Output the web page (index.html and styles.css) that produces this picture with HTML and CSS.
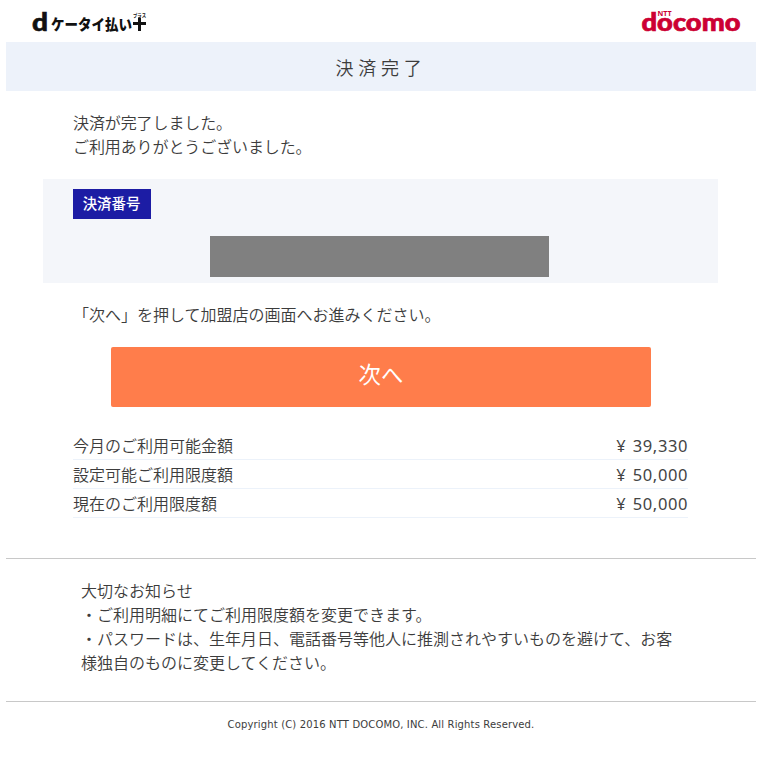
FILE: index.html
```html
<!DOCTYPE html>
<html lang="ja">
<head>
  <meta charset="UTF-8">
  <title>決済完了</title>
  <meta name="viewport" content="width=device-width, initial-scale=1.0" />
  <link rel="stylesheet" href="styles.css">
</head>
<body>
  <div class="page">
    <header class="header">
      <svg class="logo-keitai" width="116" height="24" viewBox="0 0 116 24">
        <text x="0" y="20.800" class="logo-d" textLength="16" lengthAdjust="spacingAndGlyphs">d</text>
        <text x="19" y="19.500" class="logo-kana" textLength="81" lengthAdjust="spacingAndGlyphs">ケータイ払い</text>
        <text x="101" y="6.500" class="logo-ruby" textLength="13" lengthAdjust="spacingAndGlyphs">プラス</text>
        <path d="M107.500 7.500v13.500M101 13.500h13" stroke="#111" stroke-width="3" />
      </svg>
      <svg class="logo-docomo" width="102" height="24" viewBox="0 0 102 24">
        <text x="0.500" y="20.700" class="logo-name" textLength="99" lengthAdjust="spacingAndGlyphs">docomo</text>
        <text x="16.500" y="5.800" class="logo-ntt" textLength="14" lengthAdjust="spacingAndGlyphs">NTT</text>
      </svg>
    </header>

    <h1 class="title">決済完了</h1>

    <div class="content">
      <p class="message">決済が完了しました。<br>ご利用ありがとうございました。</p>

      <div class="number-box">
        <span class="number-label">決済番号</span>
        <div class="number-value"></div>
      </div>

      <p class="guide">「次へ」を押して加盟店の画面へお進みください。</p>
      <button class="next-btn" type="button">次へ</button>

      <dl class="limits">
        <div class="limit-row"><dt>今月のご利用可能金額</dt><dd>¥ 39,330</dd></div>
        <div class="limit-row"><dt>設定可能ご利用限度額</dt><dd>¥ 50,000</dd></div>
        <div class="limit-row"><dt>現在のご利用限度額</dt><dd>¥ 50,000</dd></div>
      </dl>
    </div>

    <div class="notice">
      <p>大切なお知らせ<br>・ご利用明細にてご利用限度額を変更できます。<br>・パスワードは、生年月日、電話番号等他人に推測されやすいものを避けて、お客様独自のものに変更してください。</p>
    </div>

    <footer class="footer">Copyright (C) 2016 NTT DOCOMO, INC. All Rights Reserved.</footer>
  </div>
</body>
</html>
```
FILE: styles.css
```css
* {
  box-sizing: border-box;
}

body {
  margin: 0;
  background: #fff;
  color: #3c3c3c;
  font-family: "Noto Sans CJK JP", sans-serif;
  font-size: 16px;
  font-weight: 350;
  line-height: 24px;
}

p, h1, dl, dd {
  margin: 0;
}

.page {
  width: 750px;
  margin-left: 6px;
}

/* header */
.header {
  display: flex;
  justify-content: space-between;
  height: 42px;
  padding: 10px 13px 0 26px;
}

.logo-keitai,
.logo-docomo {
  overflow: visible;
}

.logo-d {
  font: 900 25px Lato, sans-serif;
  fill: #111;
  stroke: #111;
  stroke-width: 0.6px;
}

.logo-kana {
  font: 900 15px "Noto Sans CJK JP", sans-serif;
  fill: #111;
}

.logo-ruby {
  font: bold 5px "Noto Sans CJK JP", sans-serif;
  fill: #111;
}

.logo-name {
  font: 900 25px Lato, sans-serif;
  fill: #cc0033;
  stroke: #cc0033;
  stroke-width: 0.7px;
}

.logo-ntt {
  font: bold 7px "Open Sans", sans-serif;
  fill: #cc0033;
}

.title {
  height: 49px;
  background: #edf2fa;
  font-size: 18px;
  font-weight: 350;
  line-height: 50px;
  letter-spacing: 4.8px;
  text-align: center;
}

/* main */
.content {
  width: 675px;
  margin: 0 auto 0 37px;
  padding-top: 19px;
}

.message {
  padding: 0 30px;
  letter-spacing: -0.1px;
}

.number-box {
  height: 104px;
  margin-top: 21px;
  padding: 10px 30px 0;
  background: #f4f6fa;
}

.number-label {
  display: block;
  width: 78px;
  height: 30px;
  padding-right: 1px;
  background: #1c1ca4;
  color: #fff;
  font-size: 14.4px;
  font-weight: 500;
  line-height: 28px;
  text-align: center;
}

.number-value {
  width: 339px;
  height: 41px;
  margin: 17px auto 0 137px;
  background: #808080;
}

.guide {
  margin-top: 19px;
  padding: 0 30px;
}

.next-btn {
  display: block;
  width: 540px;
  height: 60px;
  margin: 21px 0 0 68px;
  padding: 0 0 8px;
  border: none;
  border-radius: 2px;
  background: #ff7d4b;
  color: #fff;
  font-family: inherit;
  font-size: 22.4px;
  cursor: pointer;
}

.limits {
  margin: 24px 30px 40px;
}

.limit-row {
  display: flex;
  justify-content: space-between;
  height: 29px;
  padding-top: 2px;
  border-bottom: 1px solid #ecf2fa;
}

.limit-row dd {
  padding-top: 1px;
  font-family: "Noto Sans", sans-serif;
  font-size: 16.5px;
  font-weight: 400;
  color: #444;
  letter-spacing: 0.6px;
  word-spacing: 1.5px;
}

.notice {
  height: 144px;
  padding: 19px 75px 0;
  border-top: 1px solid #c8c8c8;
  border-bottom: 1px solid #c8c8c8;
}

.footer {
  padding-top: 11px;
  font-family: "DejaVu Sans", sans-serif;
  font-size: 10px;
  font-weight: 400;
  letter-spacing: 0.15px;
  text-align: center;
}
```
